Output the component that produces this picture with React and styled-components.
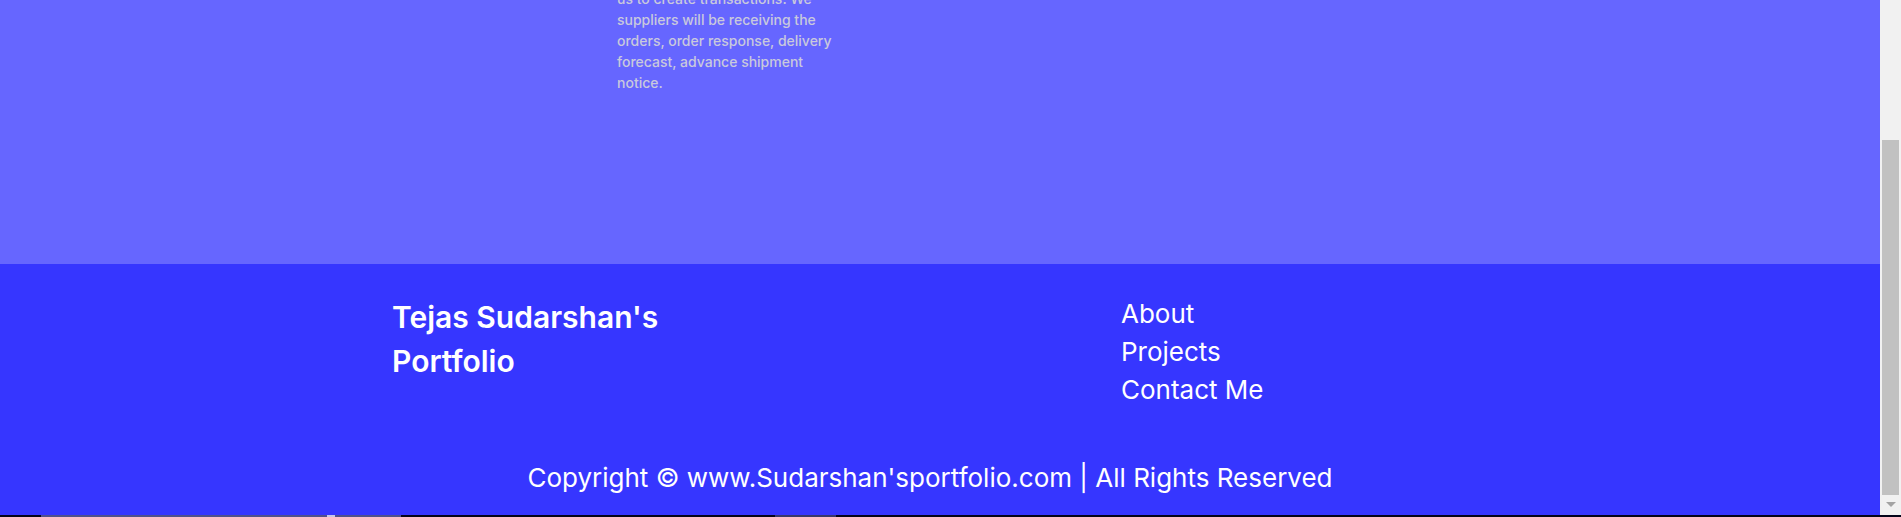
import React from "react";
import styled, { createGlobalStyle } from "styled-components";

const GlobalStyle = createGlobalStyle`
  * { box-sizing: border-box; }
  body {
    margin: 0;
    font-family: Inter, "Liberation Sans", sans-serif;
    color: #fff;
  }
  h2, p, ul { margin: 0; padding: 0; }
`;

const Screen = styled.div`
  display: grid;
  grid-template: minmax(0, 1fr) 2px / minmax(0, 1fr) 21px;
  height: 100vh;
  overflow: hidden;
`;

const Viewport = styled.div`
  display: flex;
  flex-direction: column;
  justify-content: flex-end;
  overflow: hidden;
  background: #6666ff;
`;

const Projects = styled.main`
  display: grid;
  grid-template-columns: 617fr 224px 1039fr;
  padding-bottom: 171px;
`;

const Description = styled.p`
  grid-column: 2;
  color: #c9c9dc;
  font-size: 14px;
  font-weight: 500;
  line-height: 21px;
`;

const Footer = styled.footer`
  padding: 31px 0 18px;
  background: #3636ff;
`;

const FooterColumns = styled.div`
  display: grid;
  grid-template-columns: 392fr 729fr 759fr;
`;

const Brand = styled.h2`
  grid-column: 2;
  max-width: 300px;
  font-size: 30px;
  font-weight: 600;
  line-height: 44px;
`;

const Links = styled.ul`
  list-style: none;
`;

const FooterLink = styled.a`
  color: inherit;
  font-size: 26px;
  line-height: 38px;
  text-decoration: none;
  display: block;
`;

const Copyright = styled.p`
  padding: 49px 20px 0 0;
  font-size: 26px;
  line-height: 39px;
  text-align: center;
`;

const ScrollTrack = styled.div`
  display: flex;
  flex-direction: column;
  align-items: center;
  padding-bottom: 8px;
  background: #f1f1f1;
`;

const ScrollThumb = styled.div`
  width: 17px;
  height: 70%;
  margin: auto 0 7px;
  background: #c1c1c1;
`;

const ScrollArrow = styled.div`
  border: 5px solid transparent;
  border-top-color: #a3a3a3;
  border-bottom: 0;
`;

const Taskbar = styled.div`
  grid-column: 1 / -1;
  display: grid;
  grid-template-columns: 41fr 286fr 8fr 66fr 374fr 61fr 1065fr;
  background: #05051a;
`;

const TaskSegment = styled.div`
  background: ${({ $tone }) => $tone};
`;

const links = ["About", "Projects", "Contact Me"];

export default function App() {
  return (
    <>
      <GlobalStyle />
      <Screen>
        <Viewport>
          <Projects>
            <Description>
              us to create transactions. We
              <br />
              suppliers will be receiving the
              <br />
              orders, order response, delivery
              <br />
              forecast, advance shipment
              <br />
              notice.
            </Description>
          </Projects>
          <Footer>
            <FooterColumns>
              <Brand>Tejas Sudarshan's Portfolio</Brand>
              <Links>
                {links.map((label) => (
                  <li key={label}>
                    <FooterLink href="#">{label}</FooterLink>
                  </li>
                ))}
              </Links>
            </FooterColumns>
            <Copyright>
              Copyright © www.Sudarshan'sportfolio.com | All Rights Reserved
            </Copyright>
          </Footer>
        </Viewport>
        <ScrollTrack>
          <ScrollThumb />
          <ScrollArrow />
        </ScrollTrack>
        <Taskbar>
          <TaskSegment />
          <TaskSegment $tone="#50508c" />
          <TaskSegment $tone="#c8c8e8" />
          <TaskSegment $tone="#50508c" />
          <TaskSegment />
          <TaskSegment $tone="#38386c" />
        </Taskbar>
      </Screen>
    </>
  );
}
